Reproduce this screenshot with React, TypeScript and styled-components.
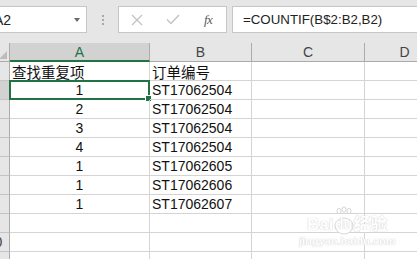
import styled, { createGlobalStyle } from 'styled-components';

const GlobalStyle = createGlobalStyle`
  html, body {
    margin: 0;
    padding: 0;
    background: #ffffff;
    overflow: hidden;
  }
  body {
    width: 417px;
    height: 259px;
    font-family: "Liberation Sans", "Noto Sans CJK SC", Arial, sans-serif;
  }
`;

const Screen = styled.div`
  position: relative;
  width: 417px;
  height: 259px;
  overflow: hidden;
  background: #ffffff;
`;

const FormulaBar = styled.div`
  display: flex;
  align-items: flex-start;
  height: 43px;
  padding-top: 6px;
  box-sizing: border-box;
  background: #e6e6e6;
`;

const NameBox = styled.div`
  display: flex;
  align-items: center;
  justify-content: space-between;
  width: 97px;
  height: 27px;
  margin-left: -10px;
  padding: 0 6px 0 3px;
  box-sizing: border-box;
  background: #ffffff;
  border: 1px solid #c6c6c6;
  font-size: 14px;
  color: #222;
`;

const DropArrow = styled.span`
  width: 0;
  height: 0;
  border-left: 3.5px solid transparent;
  border-right: 3.5px solid transparent;
  border-top: 4px solid #6a6a6a;
`;

const Grip = styled.div`
  display: flex;
  flex-direction: column;
  align-items: center;
  justify-content: center;
  gap: 2px;
  width: 31px;
  height: 27px;
`;

const GripDot = styled.span`
  width: 2px;
  height: 2px;
  background: #a8a8a8;
`;

const ButtonBox = styled.div`
  display: flex;
  align-items: center;
  width: 109px;
  height: 27px;
  box-sizing: border-box;
  background: #ffffff;
  border: 1px solid #c6c6c6;
`;

const BarButton = styled.span`
  display: flex;
  align-items: center;
  justify-content: center;
  width: 36px;
  height: 100%;
`;

const FxLabel = styled.span`
  font-family: "Liberation Serif", "DejaVu Serif", serif;
  font-style: italic;
  font-size: 13px;
  color: #5a5a5a;
  letter-spacing: -0.5px;
`;

const FormulaInput = styled.div`
  flex: 1;
  display: flex;
  align-items: center;
  height: 27px;
  margin-left: 5px;
  margin-right: -4px;
  padding-left: 10px;
  box-sizing: border-box;
  background: #ffffff;
  border: 1px solid #c6c6c6;
  font-size: 13.3px;
  color: #222;
`;

const Sheet = styled.div`
  display: grid;
  grid-template-columns: 30px 140px 102px 113px 80px;
  grid-auto-rows: 19px;
  margin-left: -20px;
`;

const Corner = styled.div`
  position: relative;
  background: #e6e6e6;
  border-right: 1px solid #ababab;
  border-bottom: 1px solid #ababab;
  box-sizing: border-box;

  &::after {
    content: "";
    position: absolute;
    right: 2px;
    bottom: 2px;
    width: 0;
    height: 0;
    border-left: 8px solid transparent;
    border-bottom: 8px solid #bdbdbd;
  }
`;

const ColHead = styled.div<{ $active?: boolean }>`
  display: flex;
  align-items: center;
  justify-content: center;
  box-sizing: border-box;
  background: ${(p) => (p.$active ? '#d2d2d2' : '#e6e6e6')};
  border-right: 1px solid #ababab;
  border-bottom: ${(p) => (p.$active ? '2px solid #217346' : '1px solid #ababab')};
  font-size: 14px;
  color: ${(p) => (p.$active ? '#217346' : '#444')};
  padding-top: ${(p) => (p.$active ? '1px' : '0')};
`;

const RowHead = styled.div<{ $active?: boolean }>`
  display: flex;
  align-items: center;
  justify-content: center;
  box-sizing: border-box;
  background: ${(p) => (p.$active ? '#d2d2d2' : '#e6e6e6')};
  border-right: 1px solid ${(p) => (p.$active ? '#217346' : '#ababab')};
  border-bottom: 1px solid #c4c4c4;
  font-size: 14px;
  color: #444;
`;

const Cell = styled.div<{ $align?: 'left' | 'center' }>`
  position: relative;
  display: flex;
  align-items: center;
  justify-content: ${(p) => (p.$align === 'center' ? 'center' : 'flex-start')};
  padding-left: ${(p) => (p.$align === 'center' ? '0' : '2px')};
  box-sizing: border-box;
  border-right: 1px solid #d4d4d4;
  border-bottom: 1px solid #d4d4d4;
  font-size: 14px;
  color: #111;
  white-space: nowrap;
`;

const CjkText = styled.span`
  font-family: "Noto Sans CJK SC", sans-serif;
  font-size: 14.5px;
  color: #111;
`;

const Selection = styled.span`
  position: absolute;
  left: -1px;
  top: -1px;
  right: -1px;
  bottom: -1px;
  border: 2px solid #217346;
  pointer-events: none;

  &::after {
    content: "";
    position: absolute;
    right: -4px;
    bottom: -4px;
    width: 5px;
    height: 5px;
    background: #217346;
    border: 1px solid #ffffff;
  }
`;

const Watermark = styled.div`
  position: absolute;
  left: 299px;
  top: 216px;
  display: flex;
  flex-direction: column;
  align-items: center;
  color: #ffffff;
  text-shadow: 0 0 1px #cfcfcf, 0 0 1px #cfcfcf;
`;

const MarkLogo = styled.div`
  display: flex;
  align-items: flex-end;
  font-family: "Liberation Sans", "Noto Sans CJK SC", sans-serif;
  font-weight: bold;
  font-size: 17px;
  line-height: 17px;
`;

const MarkUrl = styled.div`
  font-family: "Liberation Sans", sans-serif;
  font-weight: bold;
  font-size: 11px;
  margin-top: 2px;
`;

const Paw = styled.span`
  position: relative;
  display: inline-flex;
  justify-content: center;
  width: 20px;
`;

const PawText = styled.span`
  position: relative;
  font-size: 14px;
`;

const rows: [string, string][] = [
  ['1', 'ST17062504'],
  ['2', 'ST17062504'],
  ['3', 'ST17062504'],
  ['4', 'ST17062504'],
  ['1', 'ST17062605'],
  ['1', 'ST17062606'],
  ['1', 'ST17062607'],
];

const App = () => {
  const total = 11;
  const body = [];

  for (let r = 1; r <= total; r++) {
    const active = r === 2;
    body.push(
      <RowHead key={`h${r}`} $active={active}>
        {r}
      </RowHead>
    );
    if (r === 1) {
      body.push(
        <Cell key="a1">
          <CjkText>查找重复项</CjkText>
        </Cell>,
        <Cell key="b1">
          <CjkText>订单编号</CjkText>
        </Cell>
      );
    } else {
      const data = rows[r - 2];
      body.push(
        <Cell key={`a${r}`} $align="center">
          {data ? data[0] : ''}
          {active && <Selection />}
        </Cell>,
        <Cell key={`b${r}`}>{data ? data[1] : ''}</Cell>
      );
    }
    body.push(<Cell key={`c${r}`} />, <Cell key={`d${r}`} />);
  }

  return (
    <Screen>
      <GlobalStyle />
      <FormulaBar>
        <NameBox>
          <span>A2</span>
          <DropArrow />
        </NameBox>
        <Grip>
          <GripDot />
          <GripDot />
          <GripDot />
        </Grip>
        <ButtonBox>
          <BarButton>
            <svg width="12" height="12" viewBox="0 0 12 12">
              <path d="M1 1 L11 11 M11 1 L1 11" stroke="#c4c4c4" strokeWidth="1.4" fill="none" />
            </svg>
          </BarButton>
          <BarButton>
            <svg width="14" height="11" viewBox="0 0 14 11">
              <path d="M1 5.5 L5 9.5 L13 1" stroke="#c4c4c4" strokeWidth="1.5" fill="none" />
            </svg>
          </BarButton>
          <BarButton>
            <FxLabel>fx</FxLabel>
          </BarButton>
        </ButtonBox>
        <FormulaInput>=COUNTIF(B$2:B2,B2)</FormulaInput>
      </FormulaBar>
      <Sheet>
        <Corner />
        <ColHead $active>A</ColHead>
        <ColHead>B</ColHead>
        <ColHead>C</ColHead>
        <ColHead>D</ColHead>
        {body}
      </Sheet>
      <Watermark>
        <MarkLogo>
          Bai
          <Paw>
            <svg
              width="20"
              height="30"
              viewBox="0 0 20 30"
              style={{ position: 'absolute', bottom: -3 }}
            >
              <g fill="none" stroke="#d6d6d6" strokeWidth="1">
                <ellipse cx="5" cy="5" rx="2" ry="2.6" />
                <ellipse cx="10" cy="3.5" rx="2" ry="2.6" />
                <ellipse cx="15" cy="5" rx="2" ry="2.6" />
                <ellipse cx="10" cy="20" rx="9" ry="8" fill="#ffffff" />
              </g>
            </svg>
            <PawText>du</PawText>
          </Paw>
          经验
        </MarkLogo>
        <MarkUrl>jingyan.baidu.com</MarkUrl>
      </Watermark>
    </Screen>
  );
};

export default App;
